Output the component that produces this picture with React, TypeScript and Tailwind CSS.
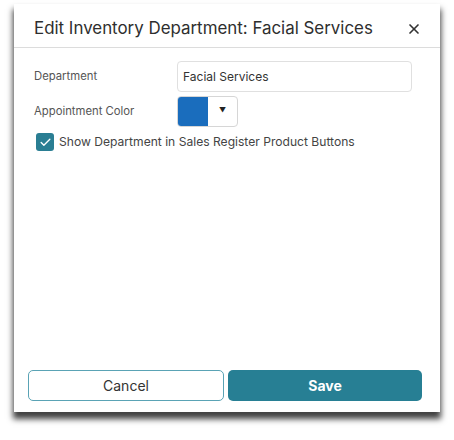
import { Check, X } from "lucide-react";

export default function App() {
  return (
    <div className="min-h-[440px] bg-white pl-[14px] pt-[4px] font-['Inter','Noto_Sans',sans-serif]">
      <div className="flex h-[408px] w-[426px] flex-col bg-white shadow-[0_6px_6px_1px_rgba(0,0,0,0.75)]">
        <div className="flex h-[44px] items-center justify-between border-b border-[#dcdcdc] pl-[20px] pr-[18px] pt-[6px]">
          <h1 className="text-[16.9px] text-[#2e2e2e]">Edit Inventory Department: Facial Services</h1>
          <X className="size-[16px] text-[#333]" strokeWidth={2.5} />
        </div>

        <div className="flex flex-1 flex-col pl-[20px] pr-[28px] pt-[13px]">
          <div className="flex items-center">
            <span className="w-[143px] text-[11.3px] text-[#555]">Department</span>
            <div className="flex h-[31px] flex-1 items-center rounded-[4px] border border-[#e0e0e0] px-[5px] text-[12px] text-[#333]">
              Facial Services
            </div>
          </div>

          <div className="mt-[4px] flex items-center">
            <span className="w-[143px] text-[11.3px] text-[#555]">Appointment Color</span>
            <div className="flex h-[31px] w-[61px] overflow-hidden rounded-[4px] border border-[#d6d6d6]">
              <div className="w-[30px] bg-[#1a6dbd]" />
              <div className="flex flex-1 items-center justify-center text-[7px] text-[#222]">▼</div>
            </div>
          </div>

          <label className="mt-[6px] flex items-center gap-[5px] pl-[2px]">
            <span className="flex size-[18px] items-center justify-center rounded-[3px] bg-[#2a7e93]">
              <Check className="size-[13px] text-white" strokeWidth={2.5} />
            </span>
            <span className="text-[12.1px] text-[#444]">Show Department in Sales Register Product Buttons</span>
          </label>
        </div>

        <div className="flex gap-[4px] pb-[11px] pl-[14px] pr-[18px]">
          <button className="h-[31px] flex-1 rounded-[5px] border border-[#5aa3b5] bg-white text-[14px] text-[#333]">
            Cancel
          </button>
          <button className="h-[31px] flex-1 rounded-[5px] bg-[#277f94] text-[14px] font-bold text-white">
            Save
          </button>
        </div>
      </div>
    </div>
  );
}
